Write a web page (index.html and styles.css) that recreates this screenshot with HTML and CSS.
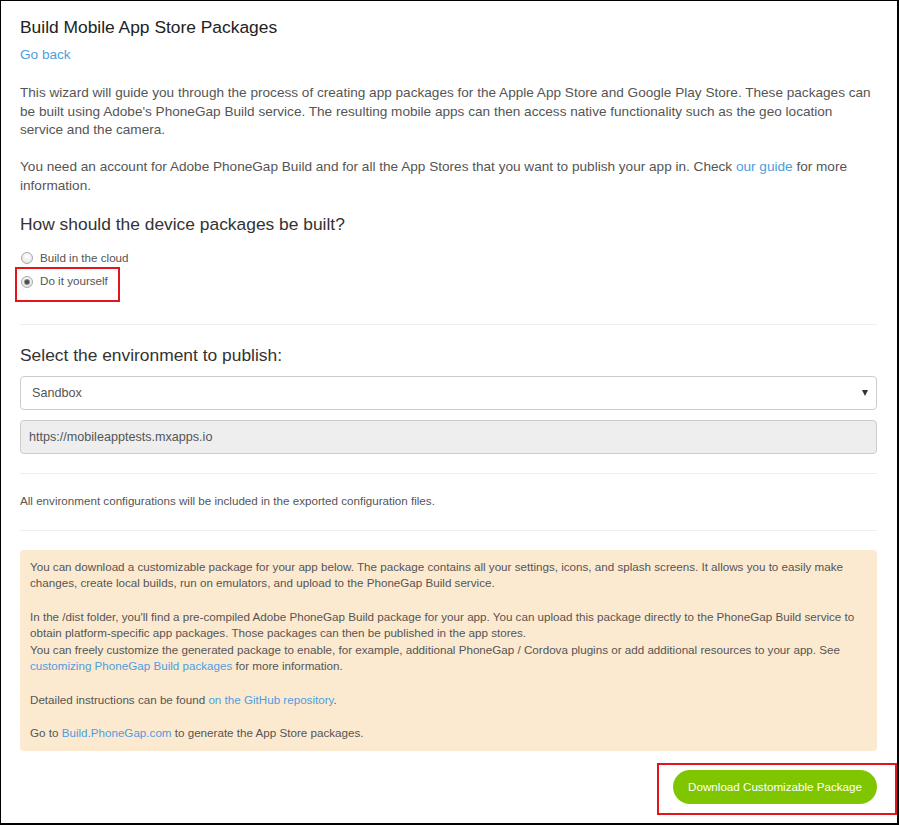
FILE: index.html
```html
<!DOCTYPE html>
<html lang="en">
<head>
<meta charset="utf-8">
<title>Build Mobile App Store Packages</title>
<link rel="stylesheet" href="styles.css">
</head>
<body>
<div class="frame">
  <h1 class="title">Build Mobile App Store Packages</h1>
  <a class="link back" href="#">Go back</a>
  <p class="para para-first">This wizard will guide you through the process of creating app packages for the Apple App Store and Google Play Store. These packages can be built using Adobe's PhoneGap Build service. The resulting mobile apps can then access native functionality such as the geo location service and the camera.</p>
  <p class="para">You need an account for Adobe PhoneGap Build and for all the App Stores that you want to publish your app in. Check <a class="link" href="#">our guide</a> for more information.</p>

  <h3 class="heading heading-build">How should the device packages be built?</h3>
  <div class="radio-group">
    <label class="radio-row"><span class="radio"></span><span class="radio-label">Build in the cloud</span></label>
    <label class="radio-row marked"><span class="radio checked"></span><span class="radio-label">Do it yourself</span></label>
  </div>

  <hr class="divider divider-a">

  <h3 class="heading heading-env">Select the environment to publish:</h3>
  <div class="select">
    <span class="select-value">Sandbox</span>
    <span class="select-arrow"></span>
  </div>
  <div class="readonly-input">https://mobileapptests.mxapps.io</div>

  <hr class="divider divider-b">
  <p class="note">All environment configurations will be included in the exported configuration files.</p>
  <hr class="divider divider-c">

  <div class="info-box">
    <p class="info-p">You can download a customizable package for your app below. The package contains all your settings, icons, and splash screens. It allows you to easily make changes, create local builds, run on emulators, and upload to the PhoneGap Build service.</p>
    <p class="info-p">In the /dist folder, you'll find a pre-compiled Adobe PhoneGap Build package for your app. You can upload this package directly to the PhoneGap Build service to obtain platform-specific app packages. Those packages can then be published in the app stores.<br>You can freely customize the generated package to enable, for example, additional PhoneGap / Cordova plugins or add additional resources to your app. See <a class="link" href="#">customizing PhoneGap Build packages</a> for more information.</p>
    <p class="info-p">Detailed instructions can be found <a class="link" href="#">on the GitHub repository</a>.</p>
    <p class="info-p info-last">Go to <a class="link" href="#">Build.PhoneGap.com</a> to generate the App Store packages.</p>
  </div>

  <div class="actions">
    <div class="btn-wrap">
      <button class="btn-download" type="button">Download Customizable Package</button>
    </div>
  </div>
</div>
</body>
</html>
```

FILE: styles.css
```css
* {
  box-sizing: border-box;
}

html, body {
  margin: 0;
  padding: 0;
  background: #fff;
}

body {
  font-family: "Liberation Sans", Arial, sans-serif;
  color: #555;
}

.frame {
  width: 899px;
  height: 825px;
  border: 1px solid #000;
  border-right-width: 2px;
  border-bottom-width: 2px;
  padding: 15.5px 20px 0 19px;
  display: flex;
  flex-direction: column;
  align-items: stretch;
}

.title {
  margin: 0;
  font-size: 17.4px;
  line-height: 20px;
  font-weight: normal;
  color: #222;
}

.link {
  color: #4d9de0;
  text-decoration: none;
}

.back {
  display: block;
  margin-top: 9.5px;
  font-size: 13.6px;
  line-height: 18.6px;
  align-self: flex-start;
}

.para {
  margin: 0;
  font-size: 13.6px;
  line-height: 18.6px;
  color: #555;
}

.para-first {
  margin-top: 19.4px;
  margin-bottom: 18.2px;
}

.heading {
  margin: 0;
  font-size: 17.4px;
  line-height: 20px;
  font-weight: normal;
  color: #333;
}

.heading-build {
  margin-top: 18.5px;
}

.radio-group {
  margin-top: 16px;
  display: flex;
  flex-direction: column;
  gap: 7.1px;
}

.radio-row {
  display: flex;
  align-items: center;
  align-self: flex-start;
  gap: 7px;
  font-size: 11.64px;
  line-height: 16.6px;
  color: #555;
  padding-left: 1px;
}

.radio-row.marked {
  position: relative;
}

.radio-row.marked::after {
  content: "";
  position: absolute;
  left: -5px;
  top: -6px;
  width: 101px;
  height: 31px;
  border: 2px solid #e3141c;
}

.radio {
  width: 12px;
  height: 12px;
  border-radius: 50%;
  border: 1px solid #a9a9a9;
  background: radial-gradient(circle at 50% 35%, #ffffff 0%, #ececec 60%, #d6d6d6 100%);
  display: flex;
  align-items: center;
  justify-content: center;
  margin-top: 1px;
}

.radio.checked::before {
  content: "";
  width: 4px;
  height: 4px;
  border-radius: 50%;
  background: #4a4a4a;
  box-shadow: 0 0 0 1px #8a8a8a;
}

.divider {
  border: 0;
  border-top: 1px solid #eee;
  margin: 0;
  height: 0;
}

.divider-a {
  margin-top: 33.7px;
}

.heading-env {
  margin-top: 20px;
}

.select {
  margin-top: 11px;
  height: 34px;
  border: 1px solid #ccc;
  border-radius: 4px;
  background: #fff;
  display: flex;
  align-items: center;
  justify-content: space-between;
  padding: 0 8px 0 11px;
  font-size: 12.6px;
  color: #555;
}

.select-arrow {
  width: 0;
  height: 0;
  border-left: 3.5px solid transparent;
  border-right: 3.5px solid transparent;
  border-top: 6px solid #333;
}

.readonly-input {
  margin-top: 10px;
  height: 34px;
  border: 1px solid #ccc;
  border-radius: 4px;
  background: #eee;
  display: flex;
  align-items: center;
  padding: 0 8px;
  font-size: 12.6px;
  color: #555;
}

.divider-b {
  margin-top: 19.5px;
}

.note {
  margin: 18.7px 0 0;
  font-size: 11.64px;
  line-height: 16.6px;
  color: #555;
}

.divider-c {
  margin-top: 20.4px;
}

.info-box {
  margin-top: 19px;
  background: #fcead0;
  border-radius: 4px;
  padding: 9px 10px 9.4px;
  font-size: 11.64px;
  line-height: 16.6px;
  color: #555;
}

.info-p {
  margin: 0 0 16.6px;
}

.info-p.info-last {
  margin-bottom: 0;
}

.actions {
  margin-top: 19px;
  display: flex;
  justify-content: flex-end;
}

.btn-wrap {
  position: relative;
}

.btn-wrap::after {
  content: "";
  position: absolute;
  left: -16px;
  top: -7px;
  width: 236px;
  height: 48px;
  border: 2px solid #e3141c;
}

.btn-download {
  height: 34px;
  padding: 0 15px;
  border: 0;
  border-radius: 17px;
  background: #80c600;
  color: #fff;
  font-family: "Liberation Sans", Arial, sans-serif;
  font-size: 11.64px;
  cursor: pointer;
  width: 204px;
}
```
